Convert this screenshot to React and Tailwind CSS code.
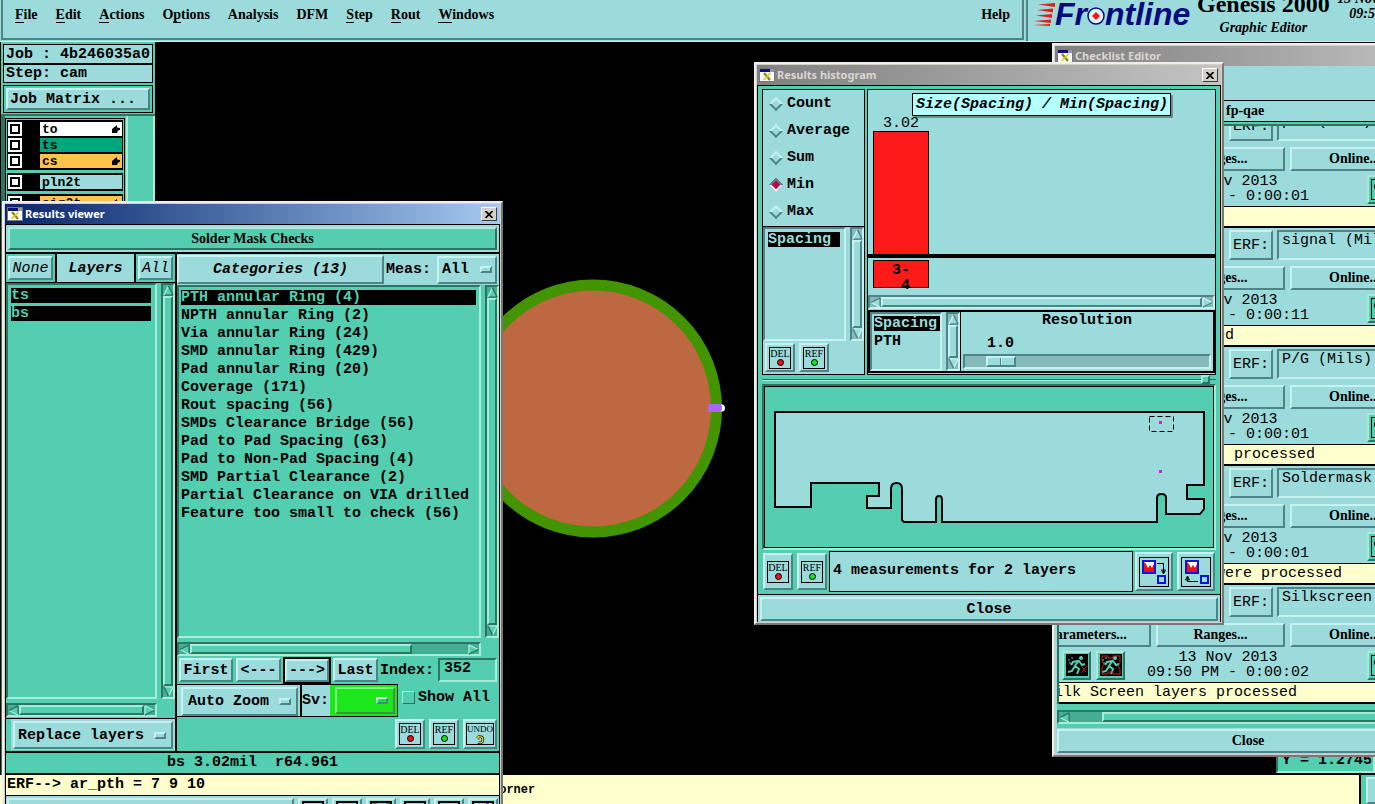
import { useState } from 'react';
import clsx from 'clsx';

const mono = "font-['Liberation_Mono',monospace] text-[15px] leading-[15px]";
const serif = "font-['Liberation_Serif',serif] text-[14px] leading-[16px] font-bold";

const raised = 'border-2 border-t-[#c8f1f1] border-l-[#c8f1f1] border-b-[#4f8486] border-r-[#4f8486]';
const sunken = 'border-2 border-t-[#4f8486] border-l-[#4f8486] border-b-[#c8f1f1] border-r-[#c8f1f1]';
const greenRaised = 'border-2 border-t-[#a5ecd9] border-l-[#a5ecd9] border-b-[#2d7461] border-r-[#2d7461]';
const greenSunken = 'border-2 border-t-[#2d7461] border-l-[#2d7461] border-b-[#a5ecd9] border-r-[#a5ecd9]';

const Arrow = ({ dir, green }) => {
  const light = green ? '#a5ecd9' : '#c8f1f1';
  const dark = green ? '#2d7461' : '#4f8486';
  const turn = { up: 0, right: 90, down: 180, left: 270 }[dir];
  const lightSides = dir === 'up' || dir === 'left';
  return (
    <svg viewBox="0 0 12 12" className="w-[11px] h-[11px] shrink-0" aria-hidden="true">
      <g transform={`rotate(${turn} 6 6)`} strokeWidth="1.5">
        <path d="M1 11L6 1L11 11Z" fill={green ? '#54ceb0' : '#9cdbdb'} />
        <path d="M1 11H11" stroke={lightSides ? dark : light} />
        <path d="M1 11L6 1" stroke={light} />
        <path d="M6 1L11 11" stroke={dark} />
      </g>
    </svg>
  );
};

const VScroll = ({ green }) => (
  <div className={clsx('w-[14px] shrink-0 flex flex-col items-center', green ? `bg-[#45ad93] ${greenSunken}` : `bg-[#86b9b9] ${sunken}`)}>
    <Arrow dir="up" green={green} />
    <div className={clsx('flex-1 w-full', green ? `bg-[#54ceb0] ${greenRaised}` : `bg-[#9cdbdb] ${raised}`)} />
    <Arrow dir="down" green={green} />
  </div>
);

const HScroll = ({ green, before = 0, after = 0, noEnd }) => (
  <div className={clsx('h-[14px] shrink-0 flex items-center', green ? `bg-[#45ad93] ${greenSunken}` : `bg-[#86b9b9] ${sunken}`)}>
    <Arrow dir="left" green={green} />
    <div
      className={clsx('flex-1 h-full', green ? `bg-[#54ceb0] ${greenRaised}` : `bg-[#9cdbdb] ${raised}`)}
      style={{ marginLeft: before, marginRight: after }}
    />
    {!noEnd && <Arrow dir="right" green={green} />}
  </div>
);

const WinIcon = () => (
  <svg viewBox="0 0 16 14" className="w-4 h-[14px] shrink-0" aria-hidden="true">
    <rect x="0.5" y="0.5" width="15" height="13" fill="#fff" stroke="#777" />
    <rect x="1" y="1" width="10" height="3" fill="#10107a" />
    <rect x="11" y="1" width="4" height="3" fill="#999" />
    <path d="M5 5L11 12" stroke="#8a8a10" strokeWidth="2.4" />
    <path d="M11.500 5L4.500 12" stroke="#d8cc20" strokeWidth="1.600" />
  </svg>
);

const Window = ({ title, active, closable = true, className, children }) => (
  <section
    className={clsx(
      'absolute flex flex-col p-px bg-[#d4d0c8] border-2 border-t-[#f0eeea] border-l-[#f0eeea] border-b-[#777] border-r-[#777]',
      className
    )}
  >
    <header
      className={clsx(
        'h-5 shrink-0 flex items-center gap-[2px] pl-[2px] pr-[3px] bg-linear-to-r',
        active ? 'from-[#0a246a] to-[#a6caf0] text-white' : 'from-[#808080] to-[#c4c4c4] text-[#dad7d0]'
      )}
    >
      <WinIcon />
      <h2 className="flex-1 font-['Noto_Sans',sans-serif] font-bold text-[11px] leading-4">{title}</h2>
      {closable && (
        <button
          aria-label="Close window"
          className="w-4 h-[14px] flex items-center justify-center bg-[#d4d0c8] border border-t-white border-l-white border-b-[#404040] border-r-[#404040]"
        >
          <svg viewBox="0 0 8 7" className="w-2 h-[7px]" aria-hidden="true">
            <path d="M0.500 0L7.500 7M7.500 0L0.500 7" stroke="#000" strokeWidth="1.700" />
          </svg>
        </button>
      )}
    </header>
    {children}
  </section>
);

const OptionMenu = ({ label, options, className, green }) => (
  <div
    className={clsx(
      'flex items-center pl-2 pr-[5px]',
      green ? 'bg-[#1ae81a] border-2 border-t-[#8af08a] border-l-[#8af08a] border-b-[#4a8a4a] border-r-[#4a8a4a]' : `bg-[#9cdbdb] ${raised}`,
      className
    )}
  >
    <select aria-label={label} className="flex-1 min-w-0 appearance-none bg-transparent font-bold outline-none">
      {options.map((o) => (
        <option key={o}>{o}</option>
      ))}
    </select>
    <span className={clsx('w-3 h-[7px] shrink-0', raised)} />
  </div>
);

const MarkButton = ({ label, dot, className, small }) => (
  <button className={clsx('w-[30px] flex items-center justify-center bg-[#9cdbdb]', raised, className)}>
    <span
      className={clsx(
        "h-[22px] shrink-0 flex flex-col items-center border border-black font-['Liberation_Serif',serif]",
        small ? 'w-[28px]' : 'w-[22px]'
      )}
    >
      <span className={clsx('h-[11px] leading-[11px]', small ? 'text-[9px]' : 'text-[10px]')}>{label}</span>
      {dot ? (
        <span className={clsx('size-[7px] rounded-full border border-black', dot)} />
      ) : (
        <svg viewBox="0 0 10 10" className="size-[10px]" aria-hidden="true">
          <path d="M3 2H6Q9 3 8 7Q6 10 3 8" fill="none" stroke="#000" strokeWidth="2.800" />
          <path d="M1 2.500L4 0V5Z" fill="#e8e030" stroke="#000" strokeWidth="0.500" />
          <path d="M3 2H6Q9 3 8 7Q6 10 3 8" fill="none" stroke="#e8e030" strokeWidth="1.400" />
        </svg>
      )}
    </span>
  </button>
);

const menus = [
  ['', 'F', 'ile'],
  ['', 'E', 'dit'],
  ['', 'A', 'ctions'],
  ['O', 'p', 'tions'],
  ['Analysis', '', ''],
  ['DFM', '', ''],
  ['', 'S', 'tep'],
  ['', 'R', 'out'],
  ['', 'W', 'indows'],
];

const Logo = () => (
  <div className="flex items-center h-7 font-['Liberation_Sans',sans-serif] font-bold italic text-[32px] leading-[28px] text-[#0a0a80]">
    <svg viewBox="0 0 22 24" className="w-[22px] h-6 shrink-0" aria-hidden="true">
      <path d="M5 2.500L22 1V5ZM4 8L20 6.500V10.500ZM3 13.500L19 12V16ZM1 19L18 17.500V21ZM0 23L17 22V24Z" fill="#f01818" />
    </svg>
    <span>Fr</span>
    <svg viewBox="0 0 18 18" className="size-[18px] shrink-0 mt-1" aria-hidden="true">
      <circle cx="9" cy="9" r="8" fill="#dff4f4" stroke="#0a0a80" strokeWidth="1.500" />
      <path d="M9 5L13 9L9 13L5 9Z" fill="#f01818" />
    </svg>
    <span>ntline</span>
  </div>
);

const Header = () => (
  <header className={`h-[42px] shrink-0 flex bg-[#9cdbdb] border-b border-[#c8f1f1] ${serif}`}>
    <nav className="flex-1 ml-[1px] mb-px flex items-start gap-[18px] pl-3 pr-3 pt-[6px] border-2 border-t-0 border-[#4f8486]">
      {menus.map(([pre, key, post]) => (
        <button key={pre + key + post} className="h-[18px]">
          {pre}
          <span className="border-b border-black">{key}</span>
          {post}
        </button>
      ))}
      <button className="h-[18px] ml-auto">Help</button>
    </nav>
    <div className="w-[349px] shrink-0 ml-[2px] flex border-l-2 border-[#4f8486] overflow-hidden">
      <div className="pl-[5px]">
        <Logo />
      </div>
      <div className="w-[136px] shrink-0 ml-[5px] mt-[-9px] text-center">
        <p className="text-[24px] leading-[26px] whitespace-nowrap">Genesis 2000</p>
        <p className="italic mt-[3px]">Graphic Editor</p>
      </div>
      <div className="italic mt-[-9px] ml-[6px] leading-[15px] shrink-0 whitespace-nowrap">
        <p>13 Nov 2013</p>
        <p className="pl-3">09:50 PM</p>
      </div>
    </div>
  </header>
);

const layerGroups = [
  [
    { name: 'to', color: 'bg-white', hand: true },
    { name: 'ts', color: 'bg-[#00a67c]' },
    { name: 'cs', color: 'bg-[#ffc34d]', hand: true },
  ],
  [{ name: 'pln2t', color: 'bg-[#9cdbdb]' }],
  [{ name: 'sig2t', color: 'bg-[#ffc34d]', hand: true }],
];

const Sidebar = () => (
  <aside className={`w-[154px] ml-[1px] shrink-0 flex flex-col bg-[#54ceb0] font-bold pt-[2px] ${mono}`}>
    <p className="mx-[2px] h-[20px] border border-black bg-[#9cdbdb] pl-[2px] leading-[19px] whitespace-nowrap">Job : 4b246035a0</p>
    <p className="mx-[2px] h-[19px] border border-black bg-[#9cdbdb] pl-[2px] leading-[17px]">Step: cam</p>
    <div className="mx-[2px] mt-[2px] p-[2px] border border-black">
      <button className={`w-full h-[22px] text-left pl-[2px] bg-[#9cdbdb] ${raised}`}>Job Matrix ...</button>
    </div>
    <div className="mt-[1px] flex-1 flex border-t-2 border-l-4 border-[#2d7461]">
      <div className="w-[120px] mt-[2px] p-[1px] flex flex-col gap-[3px] border border-black text-[13px]">
        {layerGroups.map((group, i) => (
          <div key={i} className="bg-black p-[1px]">
            {group.map((l) => (
              <div key={l.name} className="h-4 flex items-center">
                <input type="checkbox" aria-label={l.name} className="appearance-none size-[14px] border-2 border-white bg-white ring-2 ring-inset ring-black" />
                <span className={clsx('ml-[18px] flex-1 h-[14px] pl-[2px] pr-[2px] flex items-center justify-between', l.color)}>
                  {l.name}
                  {l.hand && (
                    <svg viewBox="0 0 8 8" className="size-2" aria-hidden="true">
                      <path d="M0 4L5 0V2.500L8 3V5L6 5.500L5 8H0Z" />
                    </svg>
                  )}
                </span>
              </div>
            ))}
          </div>
        ))}
      </div>
      <div className="flex-1 ml-[1px] border-x-2 border-[#a5ecd9]" />
    </div>
  </aside>
);

const categories = [
  'PTH annular Ring (4)',
  'NPTH annular Ring (2)',
  'Via annular Ring (24)',
  'SMD annular Ring (429)',
  'Pad annular Ring (20)',
  'Coverage (171)',
  'Rout spacing (56)',
  'SMDs Clearance Bridge (56)',
  'Pad to Pad Spacing (63)',
  'Pad to Non-Pad Spacing (4)',
  'SMD Partial Clearance (2)',
  'Partial Clearance on VIA drilled',
  'Feature too small to check (56)',
];

const toolIcons = [
  <path key="a" d="M11 3H20V14H11Z" fill="#f8f010" />,
  <path key="b" d="M2 3H20V14H2ZM12 3" fill="#000" />,
  <path key="c" d="M3 3H7M16 3H20" stroke="#777" strokeWidth="2" />,
  <path key="d" d="M4 3H18V14H4Z" fill="#28b828" />,
  <path key="e" d="M4 3H18V14H4Z" fill="#f4f050" />,
  <path key="f" d="M15 2L18 7" stroke="#6020a0" strokeWidth="2" />,
];

const ResultsViewer = () => {
  const [selected, setSelected] = useState(0);
  const [showAll, setShowAll] = useState(false);

  return (
    <Window title="Results viewer" active className="left-[2px] top-[201px] w-[501px]">
      <div className={`border-x border-t border-black bg-[#54ceb0] font-bold ${mono}`}>
        <div className="h-[29px] p-[2px] bg-[#9cdbdb] border-b-2 border-black">
          <h3 className={`h-[23px] leading-[20px] text-center bg-[#54ceb0] ${greenRaised} font-['Liberation_Serif',serif] text-[14px]`}>
            Solder Mask Checks
          </h3>
        </div>

        <div className="flex border-b-2 border-black">
          <div className="w-[171px] shrink-0 border-r-2 border-black flex flex-col">
            <div className="h-[29px] flex border-b border-black italic">
              <div className="w-[51px] p-[2px] border-r-2 border-black">
                <button className={`w-full h-6 italic font-normal bg-[#9cdbdb] ${raised}`}>None</button>
              </div>
              <span className="flex-1 bg-[#9cdbdb] text-center leading-[29px]">Layers</span>
              <div className="w-[41px] p-[2px] border-l-2 border-black">
                <button className={`w-full h-6 italic font-normal bg-[#9cdbdb] ${raised}`}>All</button>
              </div>
            </div>
            <div className="flex gap-1 h-[416px]">
              <ul className={`flex-1 pt-[3px] pl-[3px] pr-1 flex flex-col gap-[3px] text-[#54ceb0] ${greenSunken}`}>
                <li className="bg-black">ts</li>
                <li className="bg-black">bs</li>
              </ul>
              <VScroll green />
            </div>
            <div className="mt-1 mr-[18px]">
              <HScroll green />
            </div>
            <div className="mt-px h-8 border-t border-black pl-[5px] flex">
              <div className="flex-1 bg-[#9cdbdb] p-[2px]">
                <OptionMenu label="Layer mode" options={['Replace layers']} className="h-7 pl-[3px]" />
              </div>
            </div>
          </div>

          <div className="flex-1 min-w-0 flex flex-col">
            <div className="h-[31px] flex items-center bg-[#9cdbdb]">
              <h4 className={`w-[207px] h-[29px] leading-[26px] text-center italic ${raised}`}>Categories (13)</h4>
              <span className="flex-1 pl-[2px]">Meas:</span>
              <OptionMenu label="Meas" options={['All']} className="w-[60px] h-7 pl-[3px]! pr-[3px]!" />
              <span className="w-[2px]" />
            </div>
            <div className="flex gap-1 h-[353px]">
              <ul className={`flex-1 pt-[3px] pl-[2px] pr-[3px] flex flex-col gap-[3px] whitespace-nowrap ${greenSunken}`}>
                {categories.map((c, i) => (
                  <li
                    key={c}
                    onClick={() => setSelected(i)}
                    className={clsx('cursor-default', selected === i && 'bg-black text-[#54ceb0]')}
                  >
                    {c}
                  </li>
                ))}
              </ul>
              <VScroll green />
            </div>
            <div className="mt-1 mr-[18px]">
              <HScroll green after={56} />
            </div>
            <div className="h-7 flex items-center pl-[2px] pr-[2px]">
              <button className={`w-[54px] h-6 bg-[#9cdbdb] ${raised}`}>First</button>
              <button className={`w-[45px] h-6 ml-[3px] bg-[#9cdbdb] ${raised}`}>&lt;---</button>
              <span className="ml-[2px] border-2 border-black">
                <button className={`w-[44px] h-[23px] block bg-[#9cdbdb] ${raised}`}>---&gt;</button>
              </span>
              <button className={`w-[45px] h-6 ml-[2px] bg-[#9cdbdb] ${raised}`}>Last</button>
              <label htmlFor="index" className="ml-[2px]">Index:</label>
              <input id="index" defaultValue="352" className={`ml-1 flex-1 min-w-0 h-6 pl-[4px] pb-1 outline-none ${greenSunken}`} />
            </div>
            <div className="flex">
              <div className="h-[33px] w-[125px] p-[2px] pl-1 bg-[#9cdbdb] border-y border-r-2 border-black">
                <OptionMenu label="Zoom mode" options={['Auto Zoom']} className="h-[29px] pl-[5px]!" />
              </div>
              <div className="h-[33px] flex border-y border-r border-black bg-[#9cdbdb]">
                <span className="w-[28px] leading-[31px]">Sv:</span>
                <div className="w-[67px] py-[2px] pl-[5px] pr-[2px] bg-[#1ae81a]">
                  <OptionMenu label="Sv" options={['']} green className="h-[27px] pr-[5px]" />
                </div>
              </div>
              <label className="ml-1 h-[26px] flex items-center gap-[3px]">
                <input
                  type="checkbox"
                  checked={showAll}
                  onChange={() => setShowAll(!showAll)}
                  className="appearance-none size-[13px] border border-t-[#a5ecd9] border-l-[#a5ecd9] border-b-[#2d7461] border-r-[#2d7461] checked:bg-[#2d7461]"
                />
                Show All
              </label>
            </div>
            <div className="flex justify-end gap-1 pr-[2px] pt-[2px] pb-[2px] font-normal">
              <MarkButton label="DEL" dot="bg-[#f01010]" className="h-[30px]" />
              <MarkButton label="REF" dot="bg-[#10e820]" className="h-[30px]" />
              <MarkButton label="UNDO" small className="h-[30px] w-[34px]!" />
            </div>
          </div>
        </div>

        <p className="h-[22px] leading-[19px] text-center whitespace-pre border-b-2 border-black">bs 3.02mil  r64.961</p>
        <p className="h-[21px] leading-[19px] pl-[1px] bg-[#ffffce] border-b border-black">ERF--&gt; ar_pth = 7 9 10</p>
        <div className="h-[30px] flex gap-1 pt-[2px] pl-px bg-[#9cdbdb]">
          <button aria-label="Command" className={`w-[287px] ${raised}`} />
          {toolIcons.map((icon, i) => (
            <button key={i} aria-label={`Tool ${i + 1}`} className={`w-[30px] pt-px flex justify-center ${raised}`}>
              <svg viewBox="0 0 22 14" className="w-[22px] h-[14px] shrink-0">
                <rect x="1" y="1" width="20" height="18" fill="none" stroke="#000" strokeWidth="2" />
                {icon}
              </svg>
            </button>
          ))}
        </div>
      </div>
    </Window>
  );
};

const BoardMap = () => (
  <svg viewBox="765 387 448 160" className="w-full h-[162px] block border border-black" aria-label="Board outline">
    <path
      d="M775 412H1204V485H1187V499H1204V509L1200 514H1166V498Q1166 494 1161.500 494T1157 498V522H942V500Q942 496 939 496T936 500V522H904L902 520V489Q902 483 896.500 483T891 489V508H867V496H879V483H811V507H775Z"
      fill="#9cdbdb"
      stroke="#000"
      strokeWidth="2"
    />
    <rect x="1149.500" y="416.500" width="24" height="15" fill="none" stroke="#000" strokeDasharray="5 3" />
    <rect x="1159" y="421" width="3" height="3" fill="#d020e0" />
    <rect x="1159" y="470" width="3" height="3" fill="#d020e0" />
  </svg>
);

const TransferIcon = ({ back }) => (
  <svg viewBox="0 0 28 28" className="size-[30px] shrink-0 border border-black" aria-hidden="true">
    <rect x={back ? 4 : 3} y="3" width="12" height="12" fill="#fff" stroke="#1010e8" strokeWidth="2" />
    <path d={back ? 'M5 4V14H15V6L13 10L11 7L9 10L7 6Z' : 'M4 4V14H14V6L12 10L10 7L8 10L6 6Z'} fill="#f01010" />
    <rect x={back ? 19 : 18} y="18" width="7" height="7" fill="none" stroke="#1010e8" strokeWidth="2" />
    {back ? (
      <path d="M16 23.500H5.500V18M3.500 22L5.500 18L7.500 22Z" fill="none" stroke="#000" />
    ) : (
      <path d="M17 5.500H23.500V15M21.500 12L23.500 16L25.500 12Z" fill="none" stroke="#000" />
    )}
  </svg>
);

const Histogram = () => {
  const [stat, setStat] = useState('Min');

  return (
    <Window title="Results histogram" className="left-[754px] top-[62px] w-[470px]">
      <div className={`flex flex-col bg-[#9cdbdb] border-x border-t border-black font-bold ${mono}`}>
        <div className="bg-[#54ceb0] px-1 pt-[3px] border-b border-black">
          <div className="flex gap-[2px]">
            <div className="w-[103px] shrink-0 border border-black bg-[#9cdbdb] flex flex-col">
              <fieldset className="h-[137px] border-b border-black">
                {['Count', 'Average', 'Sum', 'Min', 'Max'].map((s) => (
                  <label key={s} className="h-[27px] pl-2 flex items-center gap-[6px]">
                    <input
                      type="radio"
                      name="stat"
                      checked={stat === s}
                      onChange={() => setStat(s)}
                      className="appearance-none size-[10px] rotate-45 border-2 border-t-[#c8f1f1] border-l-[#c8f1f1] border-b-[#4f8486] border-r-[#4f8486] checked:bg-[#c8004c] checked:border-t-[#4f8486] checked:border-l-[#4f8486] checked:border-b-[#e8f8f8] checked:border-r-[#e8f8f8]"
                    />
                    {s}
                  </label>
                ))}
              </fieldset>
              <div className="flex gap-1 h-[114px]">
                <ul className={`flex-1 p-[3px] ${sunken}`}>
                  <li className="bg-black text-[#9cdbdb] w-[72px] h-[15px]">Spacing</li>
                </ul>
                <VScroll />
              </div>
              <div className="flex gap-1 pt-[2px] pl-[2px] pb-[2px] font-normal">
                <MarkButton label="DEL" dot="bg-[#f01010]" className="h-[29px]" />
                <MarkButton label="REF" dot="bg-[#10e820]" className="h-[29px]" />
              </div>
            </div>

            <div className="flex-1 min-w-0 border border-black bg-[#9cdbdb] flex flex-col">
              <div className="h-[205px] flex flex-col">
                <p className="ml-[44px] mt-[3px] w-[259px] h-[23px] pl-[3px] leading-[22px] italic bg-[#b4ffff] border border-black shadow-[2px_2px_0_#6f8f8f]">
                  Size(Spacing) / Min(Spacing)
                </p>
                <p className="ml-[5px] w-14 h-[15px] text-center font-normal">3.02</p>
                <div className="ml-[5px] w-14 flex-1 bg-[#ff1a1a] border-x border-t border-black" />
                <div className="h-1 bg-black" />
                <p className="ml-[5px] mt-[2px] mb-[7px] w-14 h-[28px] pt-[2px] text-center whitespace-pre bg-[#ff1a1a] border border-black">{'3-\n 4'}</p>
              </div>
              <HScroll />
              <div className="mt-px flex h-[63px] border-2 border-black">
                <div className="flex gap-1 w-[90px]">
                  <ul className={`flex-1 pt-[2px] pl-[2px] flex flex-col gap-[3px] ${sunken}`}>
                    <li className="bg-black text-[#9cdbdb]">Spacing</li>
                    <li>PTH</li>
                  </ul>
                  <VScroll />
                </div>
                <div className="flex-1 border-l border-black px-[2px] pt-px">
                  <p className="text-center">
                    <label htmlFor="resolution">Resolution</label>
                  </p>
                  <p className="mt-2 ml-6">1.0</p>
                  <input
                    id="resolution"
                    type="range"
                    min="0"
                    max="10"
                    step="0.1"
                    defaultValue="1"
                    className={`block w-full h-[15px] mt-[3px] appearance-none bg-[#86b9b9] ${sunken} [&::-webkit-slider-thumb]:appearance-none [&::-webkit-slider-thumb]:w-[30px] [&::-webkit-slider-thumb]:h-[11px] [&::-webkit-slider-thumb]:bg-[#9cdbdb] [&::-webkit-slider-thumb]:bg-[linear-gradient(90deg,transparent_12px,#4f8486_12px,#4f8486_13px,#c8f1f1_13px,#c8f1f1_14px,transparent_14px)] [&::-webkit-slider-thumb]:border-2 [&::-webkit-slider-thumb]:border-t-[#c8f1f1] [&::-webkit-slider-thumb]:border-l-[#c8f1f1] [&::-webkit-slider-thumb]:border-b-[#4f8486] [&::-webkit-slider-thumb]:border-r-[#4f8486]`}
                  />
                </div>
              </div>
            </div>
          </div>

          <div className="h-[9px] flex items-center">
            <div className="flex-1 h-[2px] border-t border-b border-t-[#2d7461] border-b-[#a5ecd9]" />
            <div className={`size-[9px] ${greenRaised}`} />
            <div className="w-[6px] h-[2px] border-t border-t-[#2d7461]" />
          </div>

          <div className={greenSunken}>
            <BoardMap />
          </div>

          <div className="flex items-stretch h-[41px] mt-px mb-[2px]">
            <div className="flex gap-1 pl-px pt-[2px] pb-[2px] font-normal">
              <MarkButton label="DEL" dot="bg-[#f01010]" />
              <MarkButton label="REF" dot="bg-[#10e820]" />
            </div>
            <p className="flex-1 ml-[2px] pl-[3px] leading-[38px] bg-[#9cdbdb] border border-black">4 measurements for 2 layers</p>
            <button aria-label="Send to layer" className={`ml-[2px] my-px w-[38px] flex items-center justify-center bg-[#9cdbdb] ${raised}`}>
              <TransferIcon />
            </button>
            <button aria-label="Return from layer" className={`ml-1 mr-px my-px w-[38px] flex items-center justify-center bg-[#9cdbdb] ${raised}`}>
              <TransferIcon back />
            </button>
          </div>
        </div>
        <button className={`h-6 mx-[2px] mt-[2px] mb-px ${raised}`}>Close</button>
      </div>
    </Window>
  );
};

const checks = [
  { name: 'pth (Mils)', time: '0:00:01', status: '' },
  { name: 'signal (Mils)', time: '0:00:11', status: 'Signals are processed' },
  { name: 'P/G (Mils)', time: '0:00:01', status: 'Power & Ground were  processed' },
  { name: 'Soldermask', time: '0:00:01', status: 'Solder Mask layers were processed' },
  { name: 'Silkscreen', time: '0:00:02', status: 'Silk Screen layers processed' },
];

const Runner = ({ red }) => (
  <button aria-label={red ? 'Run in profile' : 'Run'} className={`size-[29px] flex items-center justify-center bg-[#54ceb0] ${greenRaised}`}>
    <svg viewBox="0 0 22 22" className="size-[22px] shrink-0 bg-black" aria-hidden="true">
      <circle cx="15" cy="4" r="2" fill="#54ceb0" />
      <path d="M13 6L9 12L13 15L11 20M9 12L6 17L2 18M13 7L16 11L19 10M12 7L7 8L5 11" fill="none" stroke="#54ceb0" strokeWidth="2" />
      <path d="M2 6H4M5 4H7M3 9H5" stroke="#54ceb0" />
      {red ? (
        <path d="M2 2H8V4H13V2H20V9L18 12L20 15V20H13V18H8V20H2V13L4 10L2 7Z" fill="none" stroke="#d02020" strokeWidth="1" />
      ) : (
        <path d="M16 13L20 18M21 12L15 19" stroke="#d02020" />
      )}
    </svg>
  </button>
);

const CheckItem = ({ check }) => (
  <article className={`h-[119px] w-[420px] shrink-0 ml-[-37px] flex flex-col bg-[#9cdbdb] ${mono}`}>
    <div className="pt-[2px] flex gap-1 pl-[207px]">
      <button className={`w-[44px] h-[30px] shrink-0 ${raised}`}>ERF:</button>
      <input aria-label="ERF model" defaultValue={check.name} className={`flex-1 min-w-0 h-[30px] pl-[3px] pb-[10px] outline-none ${sunken}`} />
    </div>
    <div className={`mt-[6px] flex gap-[5px] pl-px ${serif}`}>
      <button className={`w-[128px] h-6 ${raised}`}>Parameters...</button>
      <button className={`w-[129px] h-6 ${raised}`}>Ranges...</button>
      <button className={`w-[129px] h-6 ${raised}`}>Online...</button>
    </div>
    <div className="h-[34px] mt-[1px] flex items-center">
      <div className="ml-[40px] flex gap-[5px]">
        <Runner />
        <Runner red />
      </div>
      <p className="w-[206px] text-center whitespace-nowrap">
        13 Nov 2013
        <br />
        09:50 PM - {check.time}
      </p>
      <button aria-label="View results" className={`ml-[36px] size-[29px] p-[2px] bg-[#54ceb0] ${greenRaised}`}>
        <span className="block size-full border border-black p-[2px]">
          <span className="block w-[9px] h-[9px] border border-black rounded-sm" />
        </span>
      </button>
    </div>
    <p className="h-[22px] pl-[23px] leading-[19px] whitespace-pre bg-[#ffffce] border-t border-b-2 border-black">{check.status}</p>
  </article>
);

const Checklist = () => (
  <Window title="Checklist Editor" closable={false} className="left-[1052px] top-[43px] w-[390px]">
    <div className="flex flex-col bg-[#9cdbdb] pl-[2px]">
      <div className="h-[34px]" />
      <p className={`h-[22px] border-y border-black pl-[169px] leading-[20px] ${serif}`}>fp-qae</p>
      <div className="h-[584px] pt-[2px] pb-[2px] bg-[#54ceb0]">
        <div className="h-full flex flex-col justify-end overflow-hidden border-l-2 border-t-2 border-[#2d7461]">
          {checks.map((c) => (
            <CheckItem key={c.name} check={c} />
          ))}
        </div>
      </div>
      <div className="bg-[#54ceb0] pt-1 pb-1">
        <HScroll green before={32} noEnd />
      </div>
      <button className={`h-6 my-[1px] ${raised} ${serif}`}>Close</button>
    </div>
  </Window>
);

const GraphicCanvas = () => (
  <main className="flex-1 relative overflow-hidden bg-black">
    <svg viewBox="155 42 600 600" className="absolute left-0 top-0 size-[600px]" aria-label="Pad graphic">
      <circle cx="593" cy="408.500" r="123.500" fill="#bd6840" stroke="#429400" strokeWidth="11" />
      <rect x="708" y="404" width="15" height="8" rx="2" fill="#a868ff" />
      <path d="M721 404.500Q725 404 725 408T721 411.500Q723 408 721 404.500Z" fill="#fff" />
    </svg>
    <p className={`absolute right-0 bottom-[2px] w-[99px] h-[24px] pl-1 overflow-hidden whitespace-nowrap font-bold leading-[20px] bg-[#54ceb0] ${greenSunken} font-['Liberation_Mono',monospace] text-[15px]`}>
      Y = 1.27455
    </p>
  </main>
);

const App = () => (
  <div className="relative h-screen overflow-hidden bg-black flex flex-col text-black">
    <Header />
    <div className="flex-1 min-h-0 flex overflow-hidden">
      <Sidebar />
      <GraphicCanvas />
    </div>
    <footer className="h-[29px] shrink-0 flex bg-[#ffffce]">
      <p className="flex-1 pl-[492px] font-bold font-['Liberation_Mono',monospace] text-[12px] leading-[30px]">corner</p>
      <div className="w-4 border-l-2 border-black bg-[#54ceb0] pl-[5px] pt-[2px]">
        <div className={`h-full w-6 bg-[#9cdbdb] ${raised}`} />
      </div>
    </footer>
    <Checklist />
    <Histogram />
    <ResultsViewer />
  </div>
);

export default App;
